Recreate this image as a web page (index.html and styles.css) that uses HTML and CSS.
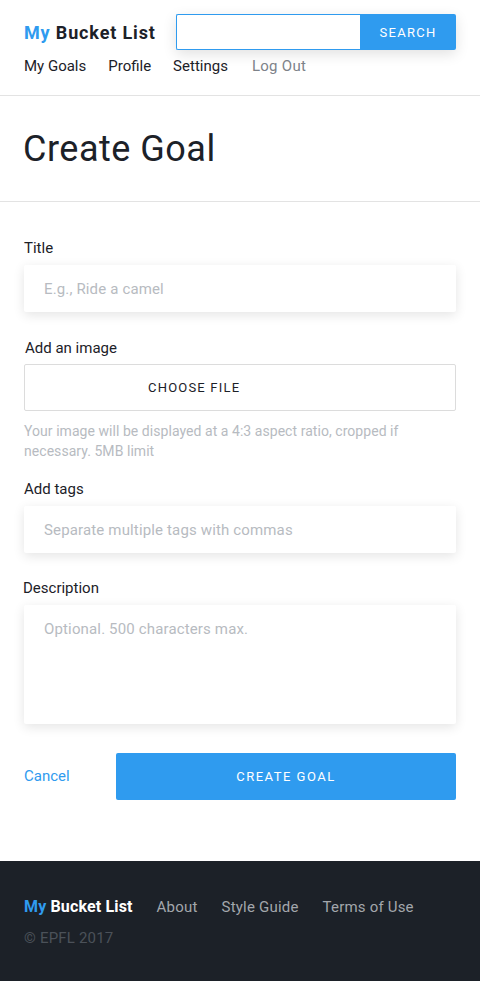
FILE: index.html
```html
<!DOCTYPE html>
<html>
<head>
<meta charset="utf-8">
<link rel="stylesheet" href="styles.css">
</head>
<body>
<header class="header">
  <div class="header-top">
    <div class="logo"><span class="logo-my">My</span> Bucket List</div>
    <form class="search">
      <input class="search-input" type="text">
      <button class="search-btn" type="button">SEARCH</button>
    </form>
  </div>
  <nav class="nav">
    <a class="nav-link">My Goals</a>
    <a class="nav-link">Profile</a>
    <a class="nav-link">Settings</a>
    <a class="nav-link nav-muted">Log Out</a>
  </nav>
</header>
<section class="page-title">
  <h1>Create Goal</h1>
</section>
<main class="form">
  <div class="field field-title">
    <label class="label">Title</label>
    <div class="input">E.g., Ride a camel</div>
  </div>
  <div class="field">
    <label class="label label-img">Add an image</label>
    <div class="file-btn"><span>CHOOSE FILE</span></div>
    <p class="help">Your image will be displayed at a 4:3 aspect ratio, cropped if necessary. 5MB limit</p>
  </div>
  <div class="field field-tags">
    <label class="label">Add tags</label>
    <div class="input">Separate multiple tags with commas</div>
  </div>
  <div class="field">
    <label class="label label-desc">Description</label>
    <div class="input textarea">Optional. 500 characters max.</div>
  </div>
  <div class="actions">
    <a class="cancel">Cancel</a>
    <button class="create-btn" type="button">CREATE GOAL</button>
  </div>
</main>
<footer class="footer">
  <div class="footer-row">
    <div class="footer-logo"><span class="logo-my">My</span> Bucket List</div>
    <a class="footer-link">About</a>
    <a class="footer-link">Style Guide</a>
    <a class="footer-link">Terms of Use</a>
  </div>
  <div class="copy">© EPFL 2017</div>
</footer>
</body>
</html>
```
FILE: styles.css
```css
* { box-sizing: border-box; }
html, body { margin: 0; padding: 0; }
body {
  font-family: Roboto, "Noto Sans", sans-serif;
  color: #1c2128;
  background: #fff;
  width: 480px;
}
.header {
  padding: 14px 24px 0;
  border-bottom: 1px solid #e3e3e3;
  height: 96px;
}
.header-top {
  display: flex;
  align-items: center;
  justify-content: space-between;
  height: 36px;
}
.logo {
  font-size: 18px;
  font-weight: 700;
  color: #1c2128;
  letter-spacing: 0.85px;
}
.logo-my { color: #2f9bef; }
.search {
  display: flex;
  width: 280px;
  height: 36px;
  margin: 0;
  box-shadow: 0 4px 14px rgba(0,0,0,0.12);
  border-radius: 2px;
}
.search-input {
  flex: 1;
  height: 36px;
  border: 1px solid #2f9bef;
  border-right: none;
  border-radius: 2px 0 0 2px;
  margin: 0;
  outline: none;
  background: #fff;
}
.search-btn {
  width: 96px;
  height: 36px;
  border: none;
  margin: 0;
  background: #2f9bef;
  color: #fff;
  font-family: inherit;
  font-size: 13px;
  letter-spacing: 1.3px;
  border-radius: 0 2px 2px 0;
}
.nav {
  display: flex;
  gap: 22px;
  margin-top: 7px;
  font-size: 15px;
}
.nav-link { color: #1c2128; }
.nav-muted { color: #7d8289; margin-left: 2px; letter-spacing: 0.3px; }
.page-title {
  height: 106px;
  border-bottom: 1px solid #e3e3e3;
  display: flex;
  align-items: center;
  padding: 0 23px;
}
.page-title h1 {
  margin: 0;
  font-size: 36px;
  font-weight: 400;
  color: #1c2128;
  letter-spacing: 0.5px;
}
.form {
  padding: 36px 24px 61px;
}
.field { margin-bottom: 24px; }
.field-title { margin-bottom: 26px; }
.label {
  display: block;
  font-size: 15px;
  line-height: 20px;
  margin-bottom: 7px;
  color: #1c2128;
}
.label-img { padding-left: 1px; margin-bottom: 6px; }
.label-desc { margin-left: -1px; }
.input {
  height: 47px;
  background: #fff;
  border-radius: 2px;
  box-shadow: 0 3px 12px rgba(0,0,0,0.11);
  padding: 0 20px;
  display: flex;
  align-items: center;
  font-size: 15px;
  color: #b7bbc1;
  letter-spacing: 0.15px;
}
.textarea {
  height: 119px;
  align-items: flex-start;
  padding-top: 15px;
}
.file-btn {
  height: 47px;
  border: 1px solid #dcdcdc;
  border-radius: 2px;
  display: flex;
  align-items: center;
  padding-left: 123px;
  font-size: 13px;
  letter-spacing: 1.2px;
  color: #1c2128;
}
.help {
  margin: 10px 0 0;
  font-size: 14px;
  line-height: 20px;
  color: #b7bbc1;
  letter-spacing: 0.05px;
}
.field-tags { margin-top: -6px; margin-bottom: 25px; }
.actions {
  display: flex;
  align-items: center;
  margin-top: 29px;
}
.cancel {
  width: 92px;
  color: #2f9bef;
  font-size: 15px;
  margin-top: -2px;
}
.create-btn {
  flex: 1;
  height: 47px;
  border: none;
  border-radius: 2px;
  background: #2f9bef;
  color: #fff;
  font-family: inherit;
  font-size: 13px;
  letter-spacing: 1.5px;
}
.footer {
  background: #1c2128;
  height: 120px;
  padding: 36px 24px 0;
}
.footer-row {
  display: flex;
  align-items: center;
  gap: 24px;
  font-size: 15px;
}
.footer-logo {
  font-size: 16px;
  font-weight: 700;
  color: #fff;
  letter-spacing: 0.15px;
}
.footer-link { color: #a3a7ac; letter-spacing: 0.2px; }
.copy {
  margin-top: 13px;
  font-size: 15px;
  color: #4b5159;
  letter-spacing: 0.2px;
}
```
